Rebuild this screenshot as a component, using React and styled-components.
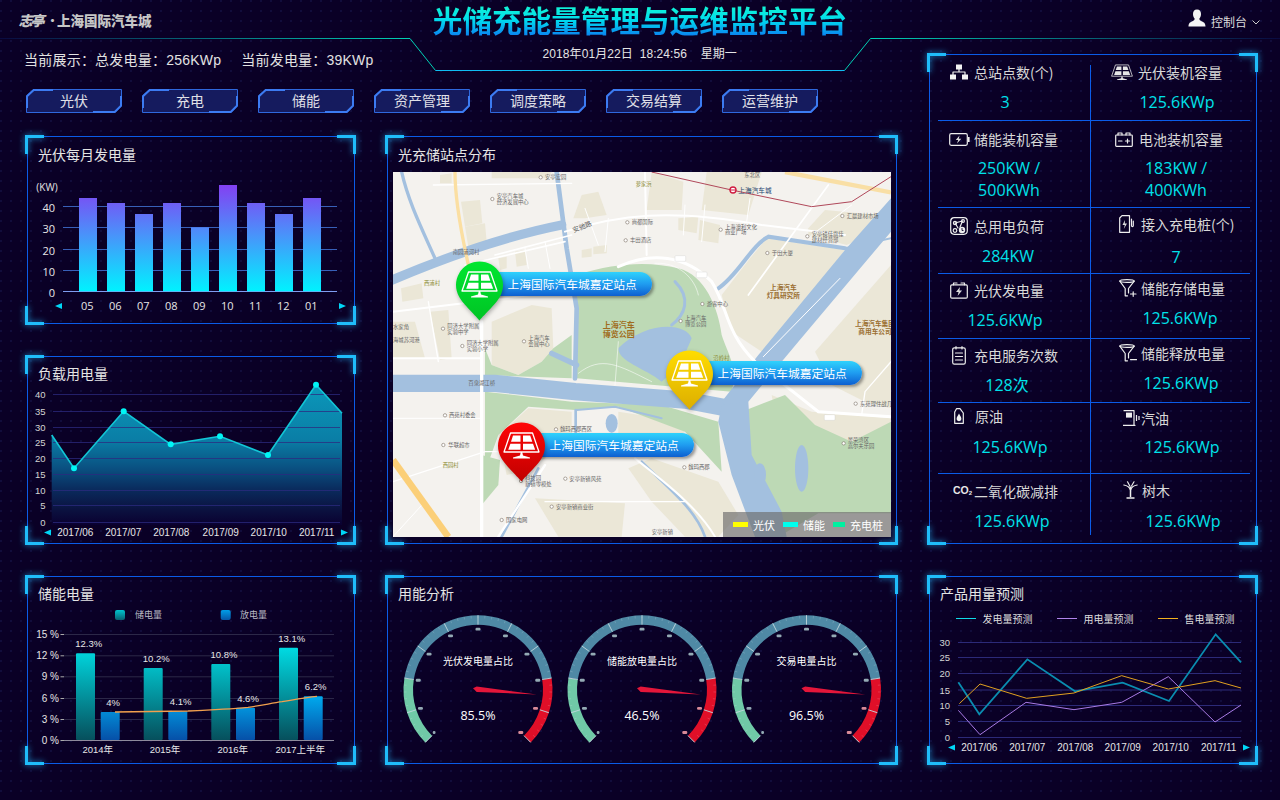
import React from "react";
import styled, { createGlobalStyle } from "styled-components";

const Global = createGlobalStyle`
  html, body { margin: 0; padding: 0; background: #0a0026; }
  #root { width: 1280px; height: 800px; overflow: hidden; }
`;

const SANS = `"Liberation Sans", "Noto Sans CJK SC", sans-serif`;
const CJK = `"Noto Sans CJK SC", "Liberation Sans", sans-serif`;
const NUM = `"Open Sans", "Noto Sans CJK SC", sans-serif`;

const Page = styled.div`
  position: relative;
  width: 1280px;
  height: 800px;
  overflow: hidden;
  color: #e2e2e2;
  font-family: ${SANS};
  background-color: #0a0026;
  background-image: radial-gradient(circle at 1px 1px, #110d3c 0.8px, transparent 1.2px);
  background-size: 10px 10px;
`;

const HeaderFrame = styled.svg`
  position: absolute;
  left: 0;
  top: 0;
  pointer-events: none;
`;

const Header = styled.header`
  position: relative;
  height: 38px;
  display: grid;
  grid-template-columns: 1fr auto 1fr;
  align-items: center;
`;

const Logo = styled.div`
  display: flex;
  align-items: center;
  padding: 0 0 0 20px;
  margin-top: 2px;
  color: #c6c6c6;
  font-family: ${CJK};
  font-weight: 900;
  font-size: 13.5px;
  line-height: 18px;
  white-space: nowrap;
`;

const LogoScript = styled.span`
  display: inline-block;
  font-size: 14px;
  letter-spacing: -2px;
  transform: skewX(-14deg);
  margin-right: 3px;
`;

const LogoDot = styled.span`
  margin-right: -1px;
  font-size: 11px;
`;

const Title = styled.h1`
  margin: 2px 0 0;
  font-family: ${CJK};
  font-size: 29.6px;
  line-height: 36px;
  font-weight: 700;
  white-space: nowrap;
  color: transparent;
  background: linear-gradient(180deg, #14f6d2 8%, #00dcee 50%, #0a86f0 92%);
  -webkit-background-clip: text;
  background-clip: text;
`;

const UserBox = styled.div`
  justify-self: end;
  display: flex;
  align-items: flex-start;
  padding-right: 20px;
  margin-top: 1px;
  font-family: ${CJK};
  font-size: 12px;
  color: #dcdcdc;
`;

const UserName = styled.span`
  line-height: 18px;
  margin-top: 4px;
`;

const Body = styled.div`
  display: flex;
  gap: 32px;
  padding-left: 27px;
`;

const LeftCol = styled.div`
  width: 870px;
  display: flex;
  flex-direction: column;
`;

const RightCol = styled.div`
  width: 328px;
  padding-top: 16px;
  display: flex;
  flex-direction: column;
  gap: 32px;
`;

const TopStrip = styled.div`
  height: 98px;
  position: relative;
`;

const InfoRow = styled.div`
  display: flex;
  align-items: flex-start;
  height: 51px;
  margin-left: -3px;
  padding-top: 12px;
  box-sizing: border-box;
  font-size: 14px;
  line-height: 20px;
  white-space: nowrap;
`;

const InfoItem = styled.span`
  margin-right: ${p => p.$gap}px;
  letter-spacing: 0.22px;
`;

const DateText = styled.span`
  margin-top: -4px;
  line-height: 16px;
  font-size: 12px;
  letter-spacing: 0.08px;
  color: #e4e4e4;
`;

const DateGap = styled.span`
  margin-left: ${p => p.$w}px;
`;

const NavRow = styled.nav`
  display: flex;
  gap: 20px;
  margin-left: -1px;
`;

const NavButton = styled.button`
  position: relative;
  width: 96px;
  height: 24px;
  padding: 0 0 2px;
  border: 0;
  background: none;
  color: #e0e0e8;
  font-family: ${CJK};
  font-size: 14px;
  line-height: 22px;
`;

const NavShape = styled.svg`
  position: absolute;
  left: 0;
  top: 0;
`;

const NavLabel = styled.span`
  position: relative;
`;

const Grid = styled.div`
  display: grid;
  grid-template-columns: 328px 510px;
  grid-template-rows: 188px 188px 188px;
  gap: 32px;
`;

const PanelBox = styled.section`
  position: relative;
  box-sizing: border-box;
  border: 1px solid #0b5ce8;
  height: ${p => p.$h}px;
  grid-row: ${p => p.$row || "auto"};
  display: flex;
  flex-direction: column;
`;

const CornerMark = styled.i`
  position: absolute;
  width: 19px;
  height: 19px;
  box-sizing: border-box;
  border: 0 solid #1fbdfa;
  filter: drop-shadow(0 0 3px rgba(30, 180, 250, 0.85));
  ${p => (p.$v === "t" ? "top: -2px; border-top-width: 3px;" : "bottom: -2px; border-bottom-width: 3px;")}
  ${p => (p.$h === "l" ? "left: -3px; border-left-width: 3px;" : "right: -2px; border-right-width: 3px;")}
`;

const PanelTitle = styled.h2`
  margin: 0;
  box-sizing: border-box;
  height: 28px;
  padding: ${p => p.$top ?? 6}px 0 0 10px;
  font-family: ${CJK};
  font-size: 14px;
  line-height: 20px;
  font-weight: 400;
  color: #e4e4e4;
`;

const ChartSvg = styled.svg`
  display: block;
  overflow: visible;
`;

const Txt = styled.text`
  font-family: ${p => (p.$cjk ? CJK : p.$num ? NUM : SANS)};
  font-size: ${p => p.$s || 10}px;
  fill: ${p => p.$c || "#e6e6e6"};
  font-weight: ${p => p.$w || 400};
  text-anchor: ${p => p.$a || "middle"};
  dominant-baseline: central;
`;

const MapWrap = styled.div`
  position: relative;
  width: 498px;
  height: 365px;
  margin: 7px 0 0 5px;
  overflow: hidden;
  background: #f4f2ee;
`;

const MapSvg = styled.svg`
  display: block;
`;

const MapText = styled.text`
  font-family: ${CJK};
  font-size: ${p => p.$s || 16}px;
  fill: ${p => p.$c || "#666"};
  font-weight: ${p => p.$w || 400};
  dominant-baseline: central;
`;

const Pin = styled.div`
  position: absolute;
  left: ${p => p.$x}px;
  top: ${p => p.$y}px;
  display: flex;
  align-items: flex-start;
`;

const PinHead = styled.svg`
  position: relative;
  z-index: 1;
  flex: none;
  filter: drop-shadow(1px 2px 2px rgba(0, 0, 0, 0.3));
`;

const PinLabel = styled.div`
  margin: 11px 0 0 -23.5px;
  width: 172px;
  height: 24px;
  box-sizing: border-box;
  padding-left: 28px;
  border-radius: 0 12px 12px 0;
  background: linear-gradient(180deg, #2fd2fc 0%, #1f9cf0 50%, #0d5fd0 100%);
  box-shadow: 2px 2px 3px rgba(40, 40, 40, 0.45);
  color: #fff;
  font-family: ${CJK};
  font-size: 11.75px;
  line-height: 23px;
  white-space: nowrap;
`;

const MapLegend = styled.div`
  position: absolute;
  right: 0;
  bottom: 0;
  width: 168px;
  height: 25px;
  box-sizing: border-box;
  padding-left: 10px;
  display: flex;
  align-items: center;
  background: rgba(110, 110, 110, 0.68);
  color: #fff;
  font-family: ${CJK};
  font-size: 11px;
`;

const LegendItem = styled.span`
  display: flex;
  align-items: center;
  width: 50px;
  white-space: nowrap;
  &::before {
    content: "";
    width: 15px;
    height: 5px;
    margin-right: 5px;
    background: ${p => p.$c};
  }
`;

const StatPad = styled.div`
  padding: 10px 0 0 8px;
`;

const StatGrid = styled.div`
  width: 312px;
  display: grid;
  grid-template-columns: 153px 159px;
  grid-template-rows: 56px 87px 66px 65px 64px 71px 61px;
`;

const StatCell = styled.div`
  box-sizing: border-box;
  padding-top: ${p => p.$top}px;
  border-bottom: ${p => (p.$last ? "0" : "1px solid #0b5ce8")};
  border-right: ${p => (p.$left ? "1px solid #0b5ce8" : "0")};
`;

const StatLabel = styled.div`
  display: flex;
  align-items: center;
  box-sizing: border-box;
  height: 16px;
  padding-bottom: 2px;
  font-family: ${CJK};
  font-size: 14px;
  line-height: 14px;
  color: #d8d8d8;
  white-space: nowrap;
`;

const IconSlot = styled.span`
  flex: none;
  width: ${p => p.$text}px;
  box-sizing: border-box;
  padding-right: ${p => p.$gap}px;
  display: flex;
  justify-content: flex-end;
  align-items: center;
`;

const StatValue = styled.div`
  width: ${p => p.$c * 2}px;
  margin-top: ${p => p.$gap ?? 9}px;
  text-align: center;
  font-family: ${NUM};
  font-size: 16px;
  line-height: 22px;
  color: #00e2ea;
`;

const CoMark = styled.span`
  font-family: ${SANS};
  font-size: 10.5px;
  font-weight: 700;
  color: #e8e8e8;
  sub {
    font-size: 6px;
    vertical-align: -1px;
  }
`;

/* ------------- icons ------------- */
const ic = { fill: "none", stroke: "#eee", strokeWidth: 1.2, strokeLinejoin: "round", strokeLinecap: "round" };

const SolarCells = ({ c = "#fff" }) => (
  <g>
    <path d="M12.5 11H34.5L41 30H6Z" fill="none" stroke={c} strokeWidth="1.3" strokeLinejoin="round" />
    <path d="M15 13.5H22.5V19.7H13Z M25 13.5H32.2L34.3 19.7H25Z M12.4 21.7H22.5V27.8H10.2Z M25 21.7H35L37.2 27.8H25Z" fill={c} />
    <path d="M22.8 30H24.2L25 33.5L32 35.6V36.4H15V35.6L22 33.5Z" fill={c} />
  </g>
);

const IconNetwork = () => (
  <svg width="18" height="16" viewBox="0 0 18 16">
    <path d="M6 0.5H12V5.5H6Z M0 10.5H6V15.5H0Z M12 10.5H18V15.5H12Z" fill="#f2f2f2" />
    <path d="M9 5V8M3 11V8H15V11" {...ic} />
  </svg>
);
const IconSolar = () => (
  <svg width="22" height="17" viewBox="5 10 37 27.5"><SolarCells c="#e6e6e6" /></svg>
);
const IconBatteryBolt = () => (
  <svg width="21" height="13" viewBox="0 0 21 13">
    <rect x="0.7" y="0.7" width="17.6" height="11.6" rx="1.5" {...ic} />
    <rect x="19" y="4" width="1.6" height="5" fill="#eee" />
    <path d="M10.5 2.5L6.8 7H9.2L8 10.5L12.3 5.8H9.8Z" fill="#ddd" />
  </svg>
);
const IconBatteryPlus = () => (
  <svg width="18" height="15" viewBox="0 0 18 15">
    <rect x="0.7" y="3" width="16.6" height="11.4" rx="0.8" {...ic} />
    <path d="M3 3V1H7V3M11 3V1H15V3" {...ic} />
    <path d="M3.5 9H7M10.5 9H14.5M12.5 7V11" {...ic} />
  </svg>
);
const IconLoad = () => (
  <svg width="18" height="18" viewBox="0 0 18 18">
    <rect x="0.7" y="0.7" width="16.6" height="16.6" rx="3.5" {...ic} />
    <path d="M5 6L12.5 4M5 6L8 11M12.5 4L10 10" {...ic} />
    <circle cx="5" cy="6" r="1.6" {...ic} />
    <circle cx="5" cy="13.5" r="1.8" {...ic} />
    <circle cx="13" cy="4" r="1.4" {...ic} />
    <circle cx="12" cy="13" r="3.2" fill="#eee" />
    <path d="M12 11V13.5H13.5" stroke="#0a0026" fill="none" strokeWidth="0.9" />
  </svg>
);
const IconPile = () => (
  <svg width="15" height="18" viewBox="0 0 15 18">
    <path d="M3 0.7H10.5V17.3H0.7V3Z" {...ic} />
    <path d="M6 5L3.5 10H5.8L4.8 14L8 8.5H5.8Z" fill="#ddd" />
    <path d="M12.5 4V10.5C12.5 12 14.3 12 14.3 10.5V6" {...ic} />
  </svg>
);
const IconBatteryTop = () => (
  <svg width="18" height="17" viewBox="0 0 18 17">
    <rect x="0.7" y="2.8" width="16.6" height="13.4" rx="1.2" {...ic} />
    <path d="M3.5 2.8V1H7M11 1H14.5V2.8" {...ic} />
    <path d="M10 5L6 10H8.6L7.6 14L12 8.6H9.4Z" fill="#ddd" />
  </svg>
);
const IconFunnel = ({ sign }) => (
  <svg width="18" height="18" viewBox="0 0 18 18">
    <ellipse cx="8" cy="2" rx="7.2" ry="1.4" {...ic} />
    <path d="M0.8 2.2L6.2 9.5V16.8H8.5M15.2 2.2L9.5 9.5V14" {...ic} />
    {sign === "+" ? <path d="M11.5 15H17M14.2 12.8V17.3" {...ic} /> : <path d="M11.5 15.6H17.5" {...ic} />}
  </svg>
);
const IconClip = () => (
  <svg width="14" height="19" viewBox="0 0 14 19">
    <rect x="0.7" y="1.8" width="12.6" height="16.4" rx="1.6" {...ic} />
    <path d="M4 0.7V3M10 0.7V3M3.5 7H10.5M3.5 10.5H10.5M3.5 14H10.5" {...ic} />
  </svg>
);
const IconOil = () => (
  <svg width="10" height="16" viewBox="0 0 10 16">
    <path d="M2.5 0.7H6L9.3 5V15.3H0.7V4Z" {...ic} />
    <path d="M5 5.5C6 7.5 7.4 9 7.4 10.8C7.4 12.2 6.3 13.3 5 13.3C3.7 13.3 2.6 12.2 2.6 10.8C2.6 9 4 7.5 5 5.5Z" fill="#f2f2f2" />
  </svg>
);
const IconPump = () => (
  <svg width="17" height="16" viewBox="0 0 17 16">
    <path d="M1 0.7H11V15.3H1M0 15.3H12" {...ic} />
    <rect x="3" y="2.6" width="6" height="5" fill="#eee" />
    <path d="M13.5 5V11M16 6V10" stroke="#eee" strokeWidth="1.2" />
  </svg>
);
const IconTree = () => (
  <svg width="15" height="18" viewBox="0 0 15 18">
    <path d="M7.5 5.5V16M3.5 17H11.5" stroke="#eee" strokeWidth="1.5" fill="none" />
    <path d="M7.5 9C6.5 6 4 4.5 0.8 4M7.5 9C8.5 6 11 4.5 14.2 4M6.8 5L4.5 0.8M8.5 5L11 0.8" {...ic} />
  </svg>
);

const ARROW_L = (x, y) => `${x - 4},${y} ${x + 3},${y - 3} ${x + 3},${y + 3}`;
const ARROW_R = (x, y) => `${x + 4},${y} ${x - 3},${y - 3} ${x - 3},${y + 3}`;

const Arrows = ({ lx, rx, y }) => (
  <g fill="#00d6f6">
    <polygon points={ARROW_L(lx, y)} />
    <polygon points={ARROW_R(rx, y)} />
  </g>
);

const Panel = ({ title, h = 188, row, titleTop, children }) => (
  <PanelBox $h={h} $row={row}>
    <CornerMark $v="t" $h="l" />
    <CornerMark $v="t" $h="r" />
    <CornerMark $v="b" $h="l" />
    <CornerMark $v="b" $h="r" />
    {title && <PanelTitle $top={titleTop}>{title}</PanelTitle>}
    {children}
  </PanelBox>
);

/* ------------- chart 1 ------------- */
const BarChart = () => {
  const tops = [198, 203, 214, 203, 227.3, 185, 203, 214, 198];
  const xs = [79, 107, 135, 163, 191, 219, 247, 275, 303];
  const labels = ["05", "06", "07", "08", "09", "10", "11", "12", "01"];
  return (
    <ChartSvg width="326" height="158" viewBox="28 165 326 158">
      <defs>
        <linearGradient id="barG" gradientUnits="userSpaceOnUse" x1="0" y1="185" x2="0" y2="291">
          <stop offset="0" stopColor="#8340f2" />
          <stop offset="0.45" stopColor="#4c8ffa" />
          <stop offset="1" stopColor="#00f2ff" />
        </linearGradient>
      </defs>
      {[206.5, 227.5, 249.5, 270.5].map(y => (
        <line key={y} x1="63" x2="337" y1={y} y2={y} stroke="#3860b8" />
      ))}
      <line x1="63" x2="337" y1="291.5" y2="291.5" stroke="#7f9df0" />
      {xs.map((x, i) => (
        <rect key={x} x={x} y={tops[i]} width="18" height={291.3 - tops[i]} fill="url(#barG)" />
      ))}
      <Txt x="47" y="186.5" $s={10} $num>(KW)</Txt>
      {[[40, 207.5], [30, 228.5], [20, 250], [10, 271], [0, 292]].map(([v, y]) => (
        <Txt key={v} x="55" y={y} $s={11} $a="end" $num>{v}</Txt>
      ))}
      {xs.map((x, i) => (
        <Txt key={x} x={x + 8.3} y="305.5" $s={11} $num>{labels[i]}</Txt>
      ))}
      <Arrows lx={59} rx={342} y={306} />
    </ChartSvg>
  );
};

/* ------------- chart 2 ------------- */
const AreaChart = () => {
  const pts = [[51.7, 435], [74, 468.3], [123.7, 411.3], [170.7, 444.3], [220, 436.3], [268, 455], [316, 384.7], [342, 413.3]];
  const line = pts.map(p => p.join(",")).join(" ");
  const ys = [394.5, 411.5, 427.5, 442.5, 458.5, 474.5, 490.5, 505.5, 522.5];
  const vals = [40, 35, 30, 25, 20, 15, 10, 5, 0];
  const xl = [["2017/06", 75.3], ["2017/07", 123.3], ["2017/08", 171.3], ["2017/09", 220.7], ["2017/10", 268.7], ["2017/11", 316.7]];
  return (
    <ChartSvg width="326" height="158" viewBox="28 385 326 158">
      <defs>
        <linearGradient id="areaG" gradientUnits="userSpaceOnUse" x1="0" y1="385" x2="0" y2="525">
          <stop offset="0" stopColor="#0b98ba" />
          <stop offset="0.39" stopColor="#0a7ea6" />
          <stop offset="0.6" stopColor="#0a4f80" />
          <stop offset="0.75" stopColor="#0a2a5c" />
          <stop offset="0.89" stopColor="#0b1240" />
          <stop offset="1" stopColor="#0a0030" />
        </linearGradient>
      </defs>
      <polygon points={`51.7,525 ${line} 342,525`} fill="url(#areaG)" />
      {ys.map(y => (
        <line key={y} x1="53" x2="340" y1={y} y2={y} stroke="#2c2a80" opacity="0.75" />
      ))}
      <polyline points={line} fill="none" stroke="#12c6d6" strokeWidth="1.6" />
      {pts.slice(1, 7).map(([x, y]) => (
        <circle key={x} cx={x} cy={y} r="3" fill="#00f6f6" />
      ))}
      {ys.map((y, i) => (
        <Txt key={y} x="45.5" y={y} $s={9.5} $a="end" $c="#d4d4d4">{vals[i]}</Txt>
      ))}
      {xl.map(([t, x]) => (
        <Txt key={t} x={x} y="532.7" $s={10}>{t}</Txt>
      ))}
      <Arrows lx={48} rx={344} y={532.5} />
    </ChartSvg>
  );
};

/* ------------- chart 3 ------------- */
const StoreChart = () => {
  const ys = [[634, "15 %"], [655.3, "12 %"], [676.3, "9 %"], [698, "6 %"], [719, "3 %"], [740, "0 %"]];
  const bars = [
    [76, 653.3, 100.7, 712, "12.3%", 88.7, 643.7, "4%", 113, 702],
    [143.7, 668, 168.3, 711.3, "10.2%", 156.3, 658.3, "4.1%", 180.7, 701.7],
    [211.3, 664, 236, 707.7, "10.8%", 224, 654.3, "4.6%", 248, 698.3],
    [279, 647.7, 303.7, 696.3, "13.1%", 291.7, 638, "6.2%", 315.7, 686.7],
  ];
  const xl = [["2014年", 97.7], ["2015年", 165], ["2016年", 232.7], ["2017上半年", 300.3]];
  return (
    <ChartSvg width="326" height="158" viewBox="28 605 326 158">
      <defs>
        <linearGradient id="tealG" gradientUnits="userSpaceOnUse" x1="0" y1="648" x2="0" y2="740">
          <stop offset="0" stopColor="#00dae2" />
          <stop offset="1" stopColor="#064f5c" />
        </linearGradient>
        <linearGradient id="blueG" gradientUnits="userSpaceOnUse" x1="0" y1="696" x2="0" y2="740">
          <stop offset="0" stopColor="#00aaee" />
          <stop offset="1" stopColor="#0650a8" />
        </linearGradient>
        <linearGradient id="legT" x1="0" y1="0" x2="0" y2="1">
          <stop offset="0" stopColor="#00c4ce" />
          <stop offset="1" stopColor="#086070" />
        </linearGradient>
        <linearGradient id="legB" x1="0" y1="0" x2="0" y2="1">
          <stop offset="0" stopColor="#009ee8" />
          <stop offset="1" stopColor="#0656a8" />
        </linearGradient>
      </defs>
      <rect x="115" y="610" width="10" height="10" rx="2" fill="url(#legT)" />
      <Txt x="135" y="614.5" $s={9} $a="start" $c="#b8b8c4" $cjk>储电量</Txt>
      <rect x="220.7" y="610" width="10" height="10" rx="2" fill="url(#legB)" />
      <Txt x="240" y="614.5" $s={9} $a="start" $c="#b8b8c4" $cjk>放电量</Txt>
      {ys.map(([y, t], i) => (
        <g key={t}>
          <line x1="64" x2="334" y1={y + 0.5} y2={y + 0.5} stroke={i === 5 ? "#8e8a9c" : "#2c2848"} />
          <line x1="60.5" x2="64" y1={y + 0.5} y2={y + 0.5} stroke="#aaa" />
          <Txt x="59" y={y + 0.5} $s={10} $a="end">{t}</Txt>
        </g>
      ))}
      {bars.map(b => (
        <g key={b[4]}>
          <rect x={b[0]} y={b[1]} width="19" height={740 - b[1]} rx="1" fill="url(#tealG)" />
          <rect x={b[2]} y={b[3]} width="19" height={740 - b[3]} rx="1" fill="url(#blueG)" />
          <Txt x={b[5]} y={b[6]} $s={9.5}>{b[4]}</Txt>
          <Txt x={b[8]} y={b[9]} $s={9.5}>{b[7]}</Txt>
        </g>
      ))}
      <path d="M115 712 C140 711.7 165 711.3 188 711 C210 710 230 709 248 707.3 C262 705.5 272 703 282 701.7 C295 699.5 305 697.5 317 696.3" fill="none" stroke="#f2a04e" strokeWidth="1.3" />
      {xl.map(([t, x]) => (
        <Txt key={t} x={x} y="749.5" $s={9.5}>{t}</Txt>
      ))}
    </ChartSvg>
  );
};

/* ------------- gauges ------------- */
const R_OUT = 74.5;
const R_IN = 65;
const polar = (cx, cy, r, deg) => {
  const a = (deg * Math.PI) / 180;
  return [cx + r * Math.cos(a), cy - r * Math.sin(a)];
};
const band = (cx, cy, a0, a1) => {
  const [x0, y0] = polar(cx, cy, R_OUT, a0);
  const [x1, y1] = polar(cx, cy, R_OUT, a1);
  const [x2, y2] = polar(cx, cy, R_IN, a1);
  const [x3, y3] = polar(cx, cy, R_IN, a0);
  const large = a0 - a1 > 180 ? 1 : 0;
  return `M${x0} ${y0}A${R_OUT} ${R_OUT} 0 ${large} 1 ${x1} ${y1}L${x2} ${y2}A${R_IN} ${R_IN} 0 ${large} 0 ${x3} ${y3}Z`;
};

const Gauge = ({ cx, title, value }) => {
  const cy = 689.7;
  const major = Array.from({ length: 11 }, (_, i) => 225 - i * 27);
  const minor = Array.from({ length: 51 }, (_, i) => 225 - i * 5.4);
  return (
    <g>
      <path d={band(cx, cy, 225, 171)} fill="#70c9a7" />
      <path d={band(cx, cy, 171, 9)} fill="#4f89a5" />
      <path d={band(cx, cy, 9, -45)} fill="#e00f28" />
      {minor.map(a => {
        const [x0, y0] = polar(cx, cy, R_OUT - 0.3, a);
        const [x1, y1] = polar(cx, cy, R_OUT - 3, a);
        return <line key={a} x1={x0} y1={y0} x2={x1} y2={y1} stroke="#fff" strokeWidth="0.5" opacity="0.3" />;
      })}
      {major.map(a => {
        const [x0, y0] = polar(cx, cy, R_OUT, a);
        const [x1, y1] = polar(cx, cy, R_IN, a);
        const [lx, ly] = polar(cx, cy, 60.5, a);
        const red = a < 9;
        return (
          <g key={a}>
            <line x1={x0} y1={y0} x2={x1} y2={y1} stroke="#c0d6dc" strokeWidth="0.9" />
            <rect x={lx - 2.5} y={ly - 1.4} width={a === 225 ? 2.8 : 5} height="2.8" rx="1.2" fill={red ? "#d88a98" : "#94aab4"} />
          </g>
        );
      })}
      <Txt x={cx} y="660.5" $s={10} $c="#fff" $cjk>{title}</Txt>
      <Txt x={cx} y="715" $s={12.5} $c="#fff" $num>{value}</Txt>
      <path d={`M${cx - 5} ${cy - 1.5}L${cx - 1.3} ${cy - 3.2}L${cx + 58.7} ${cy + 4.8}L${cx - 1.3} ${cy + 2.2}Z`} fill="#e4163a" />
    </g>
  );
};

const GaugeChart = () => (
  <ChartSvg width="508" height="158" viewBox="388 605 508 158">
    <Gauge cx={478} title="光伏发电量占比" value="85.5%" />
    <Gauge cx={642} title="储能放电量占比" value="46.5%" />
    <Gauge cx={806.5} title="交易电量占比" value="96.5%" />
  </ChartSvg>
);

/* ------------- forecast ------------- */
const LineChart = () => {
  const toPts = arr => arr.map(([x, y]) => `${x / 3 + 920},${y / 3 + 570}`).join(" ");
  const teal = [[115, 337], [178, 433], [322, 268], [465, 364], [608, 338], [747, 393], [887, 193], [963, 277]];
  const purple = [[115, 421], [180, 494], [318, 397], [462, 419], [605, 397], [745, 320], [885, 456], [963, 405]];
  const orange = [[118, 401], [180, 342], [320, 385], [462, 369], [605, 317], [745, 357], [885, 332], [963, 354]];
  const ys = [[642.5, 30], [657.5, 25], [673.5, 20], [690, 15], [705.5, 10], [721.5, 5], [737.5, 0]];
  const xl = [["2017/06", 979.3], ["2017/07", 1027.3], ["2017/08", 1075.3], ["2017/09", 1122.7], ["2017/10", 1170.7], ["2017/11", 1218.7]];
  const legend = [[956, "#10dbe8", "发电量预测"], [1057, "#b084ea", "用电量预测"], [1158, "#f2b21e", "售电量预测"]];
  return (
    <ChartSvg width="326" height="158" viewBox="930 605 326 158">
      {legend.map(([x, c, t]) => (
        <g key={t}>
          <line x1={x} x2={x + 20} y1="618.5" y2="618.5" stroke={c} />
          <Txt x={x + 26.5} y="618.5" $s={10} $a="start" $c="#ddd" $cjk>{t}</Txt>
        </g>
      ))}
      {ys.map(([y, v]) => (
        <g key={v}>
          <line x1="958" x2="1241" y1={y} y2={y} stroke="#2c2a78" />
          <Txt x="950" y={y} $s={9.5} $a="end" $c="#d4d4d4">{v}</Txt>
        </g>
      ))}
      <polyline points={toPts(teal)} fill="none" stroke="#0a8db0" strokeWidth="1.8" />
      <polyline points={toPts(purple)} fill="none" stroke="#a87ae4" strokeWidth="1" />
      <polyline points={toPts(orange)} fill="none" stroke="#e0a020" strokeWidth="1" />
      {xl.map(([t, x]) => (
        <Txt key={t} x={x} y="747.5" $s={10}>{t}</Txt>
      ))}
      <Arrows lx={952} rx={1246} y={747.5} />
    </ChartSvg>
  );
};

/* ------------- map ------------- */
const poly = pts => pts.map(p => p.join(",")).join(" ");
const beige = [
  [[165, 120], [200, 115], [200, 145], [165, 145]],
  [[228, 200], [285, 195], [292, 265], [240, 275]],
  [[240, 275], [300, 265], [305, 320], [250, 335]],
  [[565, 250], [590, 180], [640, 170], [665, 240], [600, 250]],
  [[965, 111], [1130, 111], [1090, 240], [950, 225]],
  [[320, 111], [500, 111], [490, 130], [320, 130]],
  [[800, 111], [895, 140], [890, 225], [785, 225]],
  [[880, 250], [940, 245], [935, 295], [880, 285]],
  [[945, 255], [1005, 270], [1000, 325], [940, 315]],
  [[1095, 370], [1145, 310], [1380, 345], [1145, 660], [1040, 590], [1010, 480]],
  [[1270, 280], [1320, 225], [1480, 240], [1450, 300], [1385, 330], [1270, 300]],
  [[1290, 650], [1518, 390], [1518, 820], [1440, 800], [1340, 750]],
  [[1160, 780], [1280, 830], [1518, 850], [1518, 900], [1400, 1000], [1330, 1080], [1250, 1100], [1180, 900]],
  [[320, 560], [440, 510], [500, 520], [505, 640], [470, 680], [400, 720], [320, 690]],
  [[135, 530], [190, 525], [200, 670], [165, 675]],
  [[24, 560], [90, 560], [120, 670], [24, 670]],
  [[48, 460], [110, 445], [115, 490], [52, 500]],
  [[340, 370], [365, 365], [365, 400], [345, 405]],
  [[390, 350], [420, 345], [425, 390], [395, 395]],
  [[590, 345], [620, 340], [620, 365], [590, 368]],
  [[625, 335], [665, 330], [665, 355], [625, 358]],
  [[430, 820], [560, 830], [560, 900], [480, 970], [410, 1010], [365, 1020], [340, 900]],
  [[700, 830], [830, 850], [900, 890], [800, 960], [700, 900]],
  [[450, 1090], [720, 1105], [710, 1205], [520, 1205]],
  [[730, 1000], [800, 970], [1000, 1040], [1060, 1140], [1000, 1205], [900, 1205], [800, 1100]],
];
const roads = [
  ["M290 560L290 1205", 10],
  ["M24 530L360 490L720 440", 6],
  ["M145 150L560 145", 4],
  ["M540 290C700 240 850 220 1130 270L1380 300", 6],
  ["M780 111L785 360", 6],
  ["M330 360L560 300", 5],
  ["M240 390L540 320", 5],
  ["M1090 480L1330 150", 5],
  ["M24 850L290 850", 3],
  ["M24 1040L300 950L340 950", 4],
  ["M340 1205L480 990", 7],
  ["M480 1100L900 1100", 4],
  ["M750 970C850 1050 940 1120 990 1205", 6],
  ["M130 500L160 680", 4],
  ["M24 670L290 670", 6],
  ["M420 340L430 400M480 320L495 400M670 250L660 350M900 210L895 300M960 210L950 320M1095 190L1085 260", 3],
  ["M600 220L640 330M1280 300L1400 210", 3],
  ["M24 1205L120 1100", 3],
  ["M1518 680L1440 770L1430 840", 4],
];
const labels = [
  [480, 127, "安亭宏园"], [1078, 120, "东北区"], [335, 184, "安亭汽车城"], [335, 200, "经济发展中心"],
  [1385, 243, "汇晨建材市场"], [740, 262, "尚都国际"], [1020, 275, "上海澳利文化"], [1020, 292, "商业广场"],
  [1280, 296, "安亭镜佳旗佳"], [1280, 314, "建材经营部"], [735, 316, "丰田酒店"], [1160, 354, "于田大厦"],
  [203, 352, "南园浦河村"], [965, 507, "游客中心"], [187, 572, "同济大学附属"], [187, 590, "实验中学"],
  [430, 610, "上海汽车"], [430, 627, "会展中心"], [245, 625, "同济大学附属"], [245, 642, "实验小学"],
  [24, 575, "水家角"], [24, 616, "海城苏河港"], [250, 745, "百泉湖江桥"], [1425, 806, "东苑理住战几"],
  [192, 841, "西苑村委会"], [525, 883, "魏玛西郡西区"], [190, 930, "华联超市"], [1388, 916, "景荣湾区"],
  [1388, 934, "高尔夫乐园"], [910, 997, "魏玛西郡"], [420, 1030, "科技园"], [420, 1047, "新镇零模处"],
  [553, 1031, "安亭新镇风苑"], [513, 1115, "安亭新镇商业街"], [363, 1155, "国家电网"], [800, 1190, "安亭新镇"],
  [900, 550, "上海汽车"], [900, 566, "博览公园"],
];
const pois = [[467, 127], [322, 192], [1372, 243], [727, 262], [1007, 284], [1267, 304], [722, 316], [1147, 354], [952, 507], [174, 581], [417, 619], [232, 633], [180, 841], [513, 883], [175, 930], [1376, 925], [898, 997], [408, 1038], [541, 1031], [500, 1115], [350, 1155], [887, 558], [1412, 806]];

const CityMap = () => (
  <MapSvg width="498" height="365" viewBox="24 111 1494 1095">
    <rect x="24" y="111" width="1494" height="1095" fill="#f4f2ee" />
    {beige.map((p, i) => <polygon key={i} points={poly(p)} fill="#ebe7d7" />)}
    <path d="M575 420C700 380 800 380 880 400C960 420 1000 520 1010 600C1030 660 1060 700 1040 770L575 730Z" fill="#bdd9b5" />
    <path d="M300 770L560 800L830 810L1000 860L1010 1010L900 890L700 815L570 825L430 815L340 900L300 1010Z" fill="#bdd9b5" />
    <path d="M300 640L320 690L400 720L470 680L505 640L560 600V730L300 720Z" fill="#bdd9b5" />
    <path d="M1070 830L1200 780L1290 870L1400 920L1518 860V1135L1300 1135L1180 1205L1100 1150L1080 950Z" fill="#bdd9b5" />
    <path d="M290 960L345 975L340 1050L290 1110Z" fill="#bdd9b5" />
    <g fill="none" stroke="#a3c0df" strokeLinecap="round">
      <path d="M0 745L330 745L570 770L900 795L1030 820" strokeWidth="52" />
      <path d="M10 440C150 380 330 310 530 270" strokeWidth="28" />
      <path d="M515 111L545 340L575 520L570 730" strokeWidth="14" />
      <path d="M50 111C70 200 110 280 150 370" strokeWidth="10" />
      <path d="M1000 460C1060 420 1100 330 1150 305L1380 340" strokeWidth="12" />
      <path d="M1380 340L1518 310" strokeWidth="6" />
      <path d="M860 570C900 540 920 490 870 440" strokeWidth="9" />
      <path d="M500 655L575 690" strokeWidth="16" />
      <path d="M572 825L572 900M460 1000L350 1205" strokeWidth="8" />
      <path d="M770 980C850 1060 930 1120 960 1205" strokeWidth="8" />
      <path d="M575 825L690 815L830 850" strokeWidth="6" />
    </g>
    <polygon points="1010,800 1120,660 1380,345 1518,190 1518,290 1240,620 1090,800 1060,850" fill="#a3c0df" />
    <polygon points="1010,810 1090,800 1100,960 1190,1130 1205,1206 1110,1206 1040,1020 1000,860" fill="#a3c0df" />
    <path d="M700 640C780 560 900 560 920 610C900 660 880 700 830 740C780 700 700 680 700 640Z" fill="#a3c0df" />
    <ellipse cx="1125" cy="1020" rx="18" ry="35" fill="#a3c0df" />
    <ellipse cx="1250" cy="1000" rx="20" ry="70" fill="#a3c0df" />
    <ellipse cx="680" cy="865" rx="18" ry="28" fill="#a3c0df" />
    <g fill="none" stroke="#fff" strokeLinecap="round">
      {roads.map(([d, w], i) => <path key={i} d={d} strokeWidth={w} />)}
      <path d="M700 395C800 350 900 360 980 440C1030 520 1020 590 1110 680L1300 830L1518 845" strokeWidth="9" />
      <path d="M1135 665L1365 430" strokeWidth="3" />
      <path d="M690 750L700 620M580 715C650 660 700 690 800 740M810 385C880 380 930 430 940 480" strokeWidth="2" opacity="0.85" />
    </g>
    <path d="M210 111C210 220 240 340 250 390" fill="none" stroke="#fbdfa2" strokeWidth="10" />
    <path d="M24 975L190 1206" fill="none" stroke="#fbcf78" strokeWidth="20" />
    <path d="M1200 111L1518 172" fill="none" stroke="#f9dfa5" strokeWidth="13" />
    <polyline points="800,111 1040,165 1280,215 1400,200 1518,125" fill="none" stroke="#b0485a" strokeWidth="3" />
    <circle cx="1044" cy="165" r="9" fill="#fff" stroke="#d01c40" strokeWidth="4" />
    <line x1="1034" x2="1054" y1="165" y2="165" stroke="#d01c40" strokeWidth="3" />
    {pois.map(([x, y]) => <circle key={`${x}-${y}`} cx={x} cy={y} r="5" fill="#fff" stroke="#857a70" strokeWidth="2" />)}
    {labels.map(([x, y, t]) => <MapText key={`${x}-${y}`} x={x} y={y}>{t}</MapText>)}
    <MapText x={752} y={147} $c="#8a8a30">萝家浜</MapText>
    <MapText x={117} y={444} $c="#8a8a30">西浦村</MapText>
    <MapText x={985} y={670} $c="#8a8a30">沿岭村</MapText>
    <MapText x={173} y={989} $c="#8a8a30">西园村</MapText>
    <MapText x={1060} y={166} $s={20} $c="#24466e">上海汽车城</MapText>
    <MapText x={653} y={568} $s={24} $w={700} $c="#a06c20">上海汽车</MapText>
    <MapText x={653} y={596} $s={24} $w={700} $c="#a06c20">博览公园</MapText>
    <MapText x={1155} y={455} $s={20} $w={700} $c="#9a6e30">上海汽车</MapText>
    <MapText x={1145} y={480} $s={20} $w={700} $c="#9a6e30">灯具研究所</MapText>
    <MapText x={1410} y={563} $s={20} $w={700} $c="#9a6e30">上海汽车集团</MapText>
    <MapText x={1420} y={588} $s={20} $w={700} $c="#9a6e30">商用车公司</MapText>
    <MapText x={563} y={285} $s={20} $c="#555" transform="rotate(-22 563 285)">安驰路</MapText>
    <rect x="870" y="362" width="32" height="17" rx="3" fill="#fff" stroke="#ccc" />
    <rect x="934" y="411" width="32" height="17" rx="3" fill="#fff" stroke="#ccc" />
    <rect x="1318" y="839" width="32" height="17" rx="3" fill="#fff" stroke="#ccc" />
  </MapSvg>
);

const MapPin = ({ x, y, top, bottom, id }) => (
  <Pin $x={x} $y={y}>
    <PinHead width="47" height="60" viewBox="0 0 47 60">
      <defs>
        <linearGradient id={id} x1="0" y1="0" x2="0" y2="1">
          <stop offset="0" stopColor={top} />
          <stop offset="1" stopColor={bottom} />
        </linearGradient>
      </defs>
      <path d="M23.5 59.5C22 57 6 42 3 35.5A23.5 23.5 0 1 1 44 35.5C41 42 25 57 23.5 59.5Z" fill={`url(#${id})`} />
      <SolarCells />
    </PinHead>
    <PinLabel>上海国际汽车城嘉定站点</PinLabel>
  </Pin>
);

/* ------------- stats ------------- */
const Stat = ({ top, text, gap = 6, icon, label, c, v, vGap, left, last }) => (
  <StatCell $top={top} $left={left} $last={last}>
    <StatLabel>
      <IconSlot $text={text} $gap={gap}>{icon}</IconSlot>
      {label}
    </StatLabel>
    {v.map((t, i) => (
      <StatValue key={t} $c={c} $gap={i === 0 ? vGap : 0}>{t}</StatValue>
    ))}
  </StatCell>
);

const NAV = ["光伏", "充电", "储能", "资产管理", "调度策略", "交易结算", "运营维护"];

export default function App() {
  return (
    <Page>
      <Global />
      <HeaderFrame width="1280" height="72" viewBox="0 0 1280 72">
        <defs>
          <linearGradient id="lineL" gradientUnits="userSpaceOnUse" x1="0" y1="0" x2="410" y2="0">
            <stop offset="0" stopColor="#0a0a40" />
            <stop offset="1" stopColor="#00d0b4" />
          </linearGradient>
          <linearGradient id="lineR" gradientUnits="userSpaceOnUse" x1="870" y1="0" x2="1280" y2="0">
            <stop offset="0" stopColor="#00d0b4" />
            <stop offset="1" stopColor="#0a0a40" />
          </linearGradient>
        </defs>
        <path d="M0 38.5H410L435.5 70.5" fill="none" stroke="url(#lineL)" />
        <path d="M844.5 70.5L870.5 38.5H1280" fill="none" stroke="url(#lineR)" />
        <path d="M435.5 70.5H844.5" fill="none" stroke="#10bcf2" />
      </HeaderFrame>
      <Header>
        <Logo>
          <LogoScript>志亭</LogoScript>
          <LogoDot>•</LogoDot>
          上海国际汽车城
        </Logo>
        <Title>光储充能量管理与运维监控平台</Title>
        <UserBox>
          <svg width="18" height="18" viewBox="0 0 18 18" style={{ marginRight: 5, marginTop: 0 }}>
            <path d="M9 0.5C6.2 0.5 5 2.6 5 5C5 7 5.8 8.6 6.6 9.6C6.8 11 5.8 11.6 4 12.4C2 13.2 0.6 14 0.5 17.5H17.5C17.4 14 16 13.2 14 12.4C12.2 11.6 11.2 11 11.4 9.6C12.2 8.6 13 7 13 5C13 2.6 11.8 0.5 9 0.5Z" fill="#f4f4f4" />
          </svg>
          <UserName>控制台</UserName>
          <svg width="8" height="5" viewBox="0 0 8 5" style={{ marginLeft: 5, marginTop: 11 }}>
            <path d="M0.5 0.5L4 4L7.5 0.5" fill="none" stroke="#cfcfcf" />
          </svg>
        </UserBox>
      </Header>
      <Body>
        <LeftCol>
          <TopStrip>
            <InfoRow>
              <InfoItem $gap={20}>当前展示：总发电量：256KWp</InfoItem>
              <InfoItem $gap={0}>当前发电量：39KWp</InfoItem>
              <DateGap $w={169} />
              <DateText>2018年01月22日&nbsp;&nbsp;18:24:56&nbsp;&nbsp;&nbsp;&nbsp;星期一</DateText>
            </InfoRow>
            <NavRow>
              {NAV.map(n => (
                <NavButton key={n}>
                  <NavShape width="96" height="24" viewBox="0 0 96 24">
                    <path d="M7.5 0.5H95.5V17L89 23.5H0.5V7Z" fill="#151b5e" stroke="#2f68dd" />
                    <path d="M1 19V7.3L7.7 1H27M67 23H88.7L95 16.7V7" fill="none" stroke="#3c7bf2" strokeWidth="2" />
                  </NavShape>
                  <NavLabel>{n}</NavLabel>
                </NavButton>
              ))}
            </NavRow>
          </TopStrip>
          <Grid>
            <Panel title="光伏每月发电量" titleTop={7}><BarChart /></Panel>
            <Panel title="光充储站点分布" h={408} row="span 2" titleTop={7}>
              <MapWrap>
                <CityMap />
                <MapPin id="pinG" x={63} y={89} top="#00e630" bottom="#00c424" />
                <MapPin id="pinY" x={273} y={178} top="#ffdc00" bottom="#dcae00" />
                <MapPin id="pinR" x={105} y={250} top="#ff0606" bottom="#c00000" />
                <MapLegend>
                  <LegendItem $c="#ffff00">光伏</LegendItem>
                  <LegendItem $c="#00ffee">储能</LegendItem>
                  <LegendItem $c="#00f0a0">充电桩</LegendItem>
                </MapLegend>
              </MapWrap>
            </Panel>
            <Panel title="负载用电量"><AreaChart /></Panel>
            <Panel title="储能电量"><StoreChart /></Panel>
            <Panel title="用能分析"><GaugeChart /></Panel>
          </Grid>
        </LeftCol>
        <RightCol>
          <Panel h={490}>
            <StatPad>
              <StatGrid>
                <Stat left top={0} text={36} gap={6} icon={<IconNetwork />} label="总站点数(个)" c={67} v={["3"]} vGap={10} />
                <Stat top={0} text={47} gap={5} icon={<IconSolar />} label="光伏装机容量" c={86} v={["125.6KWp"]} vGap={10} />
                <Stat left top={11} text={36} gap={4} icon={<IconBatteryBolt />} label="储能装机容量" c={71} v={["250KW /", "500KWh"]} vGap={9} />
                <Stat top={11} text={48} gap={6} icon={<IconBatteryPlus />} label="电池装机容量" c={85} v={["183KW /", "400KWh"]} vGap={9} />
                <Stat left top={11} text={36} gap={6} icon={<IconLoad />} label="总用电负荷" c={70} v={["284KW"]} vGap={10} />
                <Stat top={9} text={50} gap={7} icon={<IconPile />} label="接入充电桩(个)" c={85} v={["7"]} vGap={13} />
                <Stat left top={9} text={36} gap={6} icon={<IconBatteryTop />} label="光伏发电量" c={67} v={["125.6KWp"]} vGap={10} />
                <Stat top={7} text={50} gap={4} icon={<IconFunnel sign="+" />} label="储能存储电量" c={89} v={["125.6KWp"]} vGap={10} />
                <Stat left top={9} text={36} gap={8} icon={<IconClip />} label="充电服务次数" c={69} v={["128次"]} vGap={10} />
                <Stat top={7} text={50} gap={4} icon={<IconFunnel sign="-" />} label="储能释放电量" c={90} v={["125.6KWp"]} vGap={10} />
                <Stat left top={6} text={37} gap={11} icon={<IconOil />} label="原油" c={72} v={["125.6KWp"]} vGap={11} />
                <Stat top={8} text={50} gap={1} icon={<IconPump />} label="汽油" c={91} v={["125.6KWp"]} vGap={9} />
                <Stat left last top={10} text={36} gap={2} icon={<CoMark>CO<sub>2</sub></CoMark>} label="二氧化碳减排" c={74} v={["125.6KWp"]} vGap={10} />
                <Stat last top={9} text={51} gap={4} icon={<IconTree />} label="树木" c={92} v={["125.6KWp"]} vGap={11} />
              </StatGrid>
            </StatPad>
          </Panel>
          <Panel title="产品用量预测"><LineChart /></Panel>
        </RightCol>
      </Body>
    </Page>
  );
}
